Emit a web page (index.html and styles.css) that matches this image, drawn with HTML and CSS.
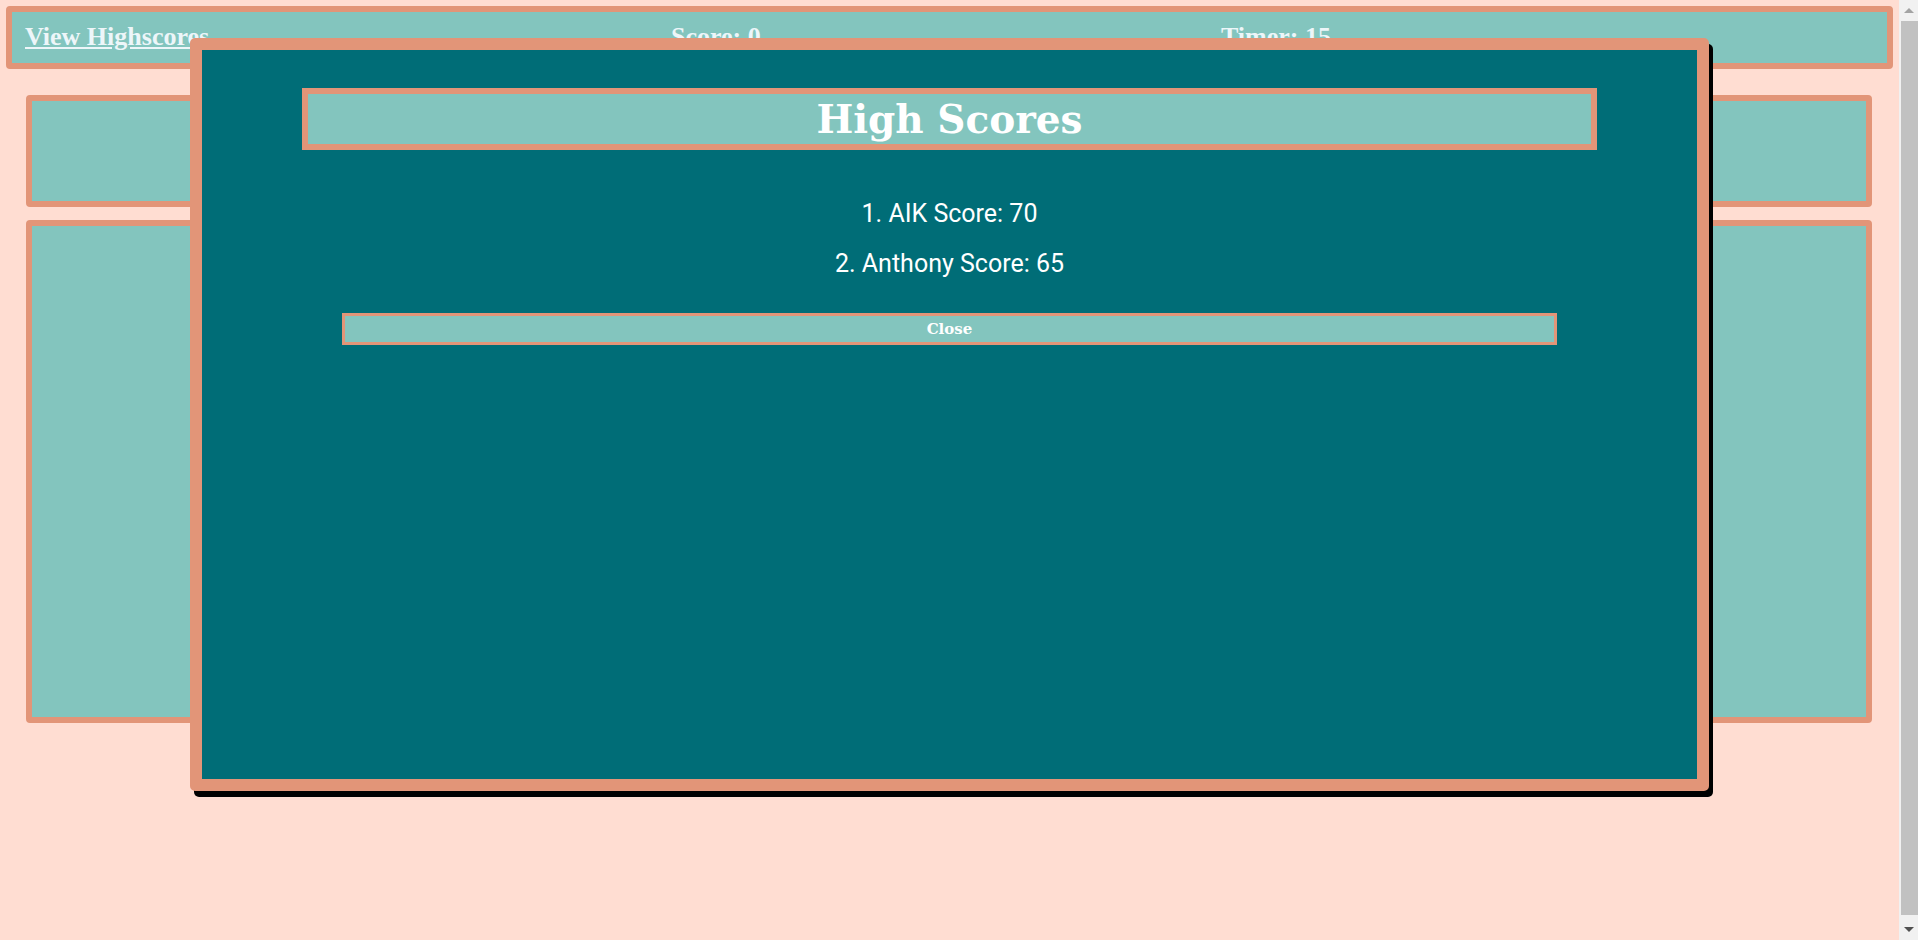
FILE: index.html
```html
<!DOCTYPE html>
<html lang="en">
<head>
<meta charset="utf-8">
<title>Quiz</title>
<link rel="stylesheet" href="styles.css">
</head>
<body>
<header class="topbar">
  <a class="hs-link" href="#">View Highscores</a>
  <span class="stat">Score: 0</span>
  <span class="stat">Timer: 15</span>
</header>
<main class="content">
  <section class="card card-question"></section>
  <section class="card card-answers"></section>
</main>
<div class="modal">
  <h1 class="modal-title">High Scores</h1>
  <ol class="scores">
    <li>1. AIK Score: 70</li>
    <li>2. Anthony Score: 65</li>
  </ol>
  <button class="close-btn" type="button">Close</button>
</div>
<div class="scrollbar" aria-hidden="true">
  <span class="arrow arrow-up"></span>
  <span class="thumb"></span>
  <span class="arrow arrow-down"></span>
</div>
</body>
</html>
```
FILE: styles.css
```css
* { box-sizing: border-box; }
html { background: #ffddd2; overflow: hidden; }
body {
  margin: 6px;
  width: 1887px;
  background: #ffddd2;
  font-family: "Liberation Serif", serif;
}
.topbar {
  display: grid;
  grid-template-columns: 646px 550px 1fr;
  height: 63px;
  padding-left: 13px;
  background: #83c5be;
  border: 6px solid #e29578;
  border-radius: 4px;
  font-family: "Liberation Serif", serif;
  font-weight: bold;
  font-size: 26px;
  line-height: 50px;
  color: #edf6f9;
}
.hs-link { color: #edf6f9; text-decoration: underline; }
.content {
  display: flex;
  flex-direction: column;
  gap: 13px;
  margin: 26px 21px 0 20px;
}
.card {
  background: #83c5be;
  border: 6px solid #e29578;
  border-radius: 4px;
}
.card-question { height: 112px; }
.card-answers { height: 503px; }
.modal {
  position: absolute;
  left: 190px;
  top: 38px;
  width: 1519px;
  height: 753px;
  background: #006d77;
  border: 12px solid #e29578;
  border-radius: 5px;
  box-shadow: 4px 6px 0 #000;
  display: flex;
  flex-direction: column;
  align-items: center;
}
.modal-title {
  margin: 38px 0 0;
  width: 1295px;
  height: 62px;
  background: #83c5be;
  border: 6px solid #e29578;
  font-family: "DejaVu Serif", serif;
  font-weight: bold;
  font-size: 39px;
  line-height: 50px;
  text-align: center;
  color: #ffffff;
}
.scores {
  list-style: none;
  margin: 50px 0 0;
  padding: 0;
  display: flex;
  flex-direction: column;
  gap: 22px;
  font-family: Roboto, sans-serif;
  font-size: 25px;
  line-height: 28px;
  color: #ffffff;
  text-align: center;
}
.close-btn {
  margin-top: 35px;
  width: 1215px;
  height: 32px;
  padding: 0;
  background: #83c5be;
  border: 3px solid #e29578;
  font-family: "DejaVu Serif", serif;
  font-weight: bold;
  font-size: 15px;
  line-height: 26px;
  color: #ffffff;
}
.scrollbar {
  position: fixed;
  top: 0;
  right: 0;
  width: 19px;
  height: 940px;
  background: #f1f1f1;
}
.thumb {
  position: absolute;
  left: 2px;
  right: 0;
  top: 21px;
  height: 894px;
  background: #c1c1c1;
}
.arrow {
  position: absolute;
  left: 5px;
  width: 0;
  height: 0;
  border-left: 5px solid transparent;
  border-right: 5px solid transparent;
}
.arrow-up {
  top: 8px;
  border-bottom: 5px solid #a3a3a3;
}
.arrow-down {
  bottom: 8px;
  border-top: 5px solid #505050;
}
```
